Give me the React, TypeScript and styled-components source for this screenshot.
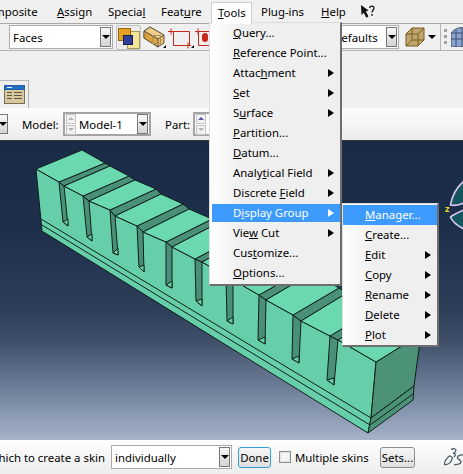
import React from 'react';
import styled, { createGlobalStyle } from 'styled-components';

const GlobalStyle = createGlobalStyle`
  html, body { margin: 0; padding: 0; background: #f0f0f0; }
  body { font-family: "Noto Sans", "Liberation Sans", sans-serif; font-size: 11.4px; color: #000; }
`;

const Page = styled.div`
  position: relative;
  width: 463px;
  height: 474px;
  overflow: hidden;
  display: flex;
  flex-direction: column;
  background: #f0f0f0;
`;

const MenuBar = styled.div`
  height: 23px;
  flex: none;
  display: flex;
  align-items: center;
  margin-left: -20px;
  background: #f0f0f0;
`;

const MenuTitle = styled.span<{ $width: number; $left?: number }>`
  flex: none;
  width: ${({ $width }) => $width}px;
  margin-left: ${({ $left }) => $left ?? 0}px;
  white-space: nowrap;
`;

const ToolsTab = styled(MenuTitle)`
  position: relative;
  z-index: 3;
  height: 21px;
  margin-top: 2px;
  line-height: 20px;
  padding-left: 6px;
  margin-left: -6px;
  box-sizing: content-box;
  border: 1px solid #d0d0d0;
  border-bottom: none;
  background: #fff;
`;

const Toolbar = styled.div`
  height: 28px;
  flex: none;
  display: flex;
  align-items: center;
  box-sizing: border-box;
  border-top: 1px solid #a8a8a8;
  border-bottom: 1px solid #b4b4b4;
  background: #f0f0f0;
`;

const EmptyRow = styled.div`
  height: 57px;
  flex: none;
  display: flex;
  align-items: flex-end;
  background: #f0f0f0;
`;

const ManagerTile = styled.div`
  width: 29px;
  height: 28px;
  display: flex;
  align-items: center;
  justify-content: center;
  box-sizing: border-box;
  padding-left: 1px;
  border-top: 1px solid #b8b8b8;
  border-right: 1px solid #b0b0b0;
`;

const ContextBar = styled.div`
  height: 33px;
  flex: none;
  display: flex;
  align-items: center;
  box-sizing: border-box;
  border-bottom: 1px solid #3a3a3a;
  background: linear-gradient(#fdfdfd, #ececec);
`;

const Label = styled.span<{ $left: number; $width: number }>`
  flex: none;
  width: ${({ $width }) => $width}px;
  margin-left: ${({ $left }) => $left}px;
  white-space: nowrap;
`;

const Combo = styled.div<{ $width: number; $left?: number; $heavy?: boolean }>`
  flex: none;
  display: flex;
  align-items: center;
  justify-content: space-between;
  box-sizing: border-box;
  width: ${({ $width }) => $width}px;
  height: 24px;
  margin-left: ${({ $left }) => $left ?? 0}px;
  border: ${({ $heavy }) => ($heavy ? '2px solid #a4a4a4' : '1px solid #ababab')};
  background: #fff;
  padding: 0 1px 0 ${({ $heavy }) => ($heavy ? 1 : 3)}px;
`;

const DropButton = styled.span`
  flex: none;
  display: flex;
  align-items: flex-start;
  justify-content: center;
  box-sizing: border-box;
  width: 11px;
  height: 20px;
  padding-top: 7px;
  border: 1px solid #777;
  background: linear-gradient(#f8f8f8, #d4d4d4);

  &::after {
    content: '';
    border-left: 4px solid transparent;
    border-right: 4px solid transparent;
    border-top: 4px solid #000;
  }
`;

const LeadDropButton = styled(DropButton)`
  margin-left: -3px;
`;

const BareArrow = styled.span<{ $left: number }>`
  flex: none;
  margin-left: ${({ $left }) => $left}px;
  border-left: 4px solid transparent;
  border-right: 4px solid transparent;
  border-top: 4px solid #000;
`;

const Spinner = styled.span`
  flex: none;
  display: flex;
  flex-direction: column;
  gap: 1px;
  margin-right: 3px;
`;

const SpinStep = styled.span<{ $down?: boolean; $live?: boolean }>`
  display: flex;
  align-items: center;
  justify-content: center;
  width: 8px;
  height: 8px;
  border: 1px solid #c4c4c4;
  background: #f2f2f2;

  &::after {
    content: '';
    border-left: 3px solid transparent;
    border-right: 3px solid transparent;
    ${({ $down }) => ($down ? 'border-top' : 'border-bottom')}: 3px solid ${({ $live }) => ($live ? '#4a5aa8' : '#b4b4b4')};
  }
`;

const ComboText = styled.span<{ $indent?: number }>`
  flex: 1;
  padding-left: ${({ $indent }) => $indent ?? 0}px;
  white-space: nowrap;
  overflow: hidden;
`;

const IconSlot = styled.span<{ $left: number; $active?: boolean }>`
  flex: none;
  display: flex;
  margin-left: ${({ $left }) => $left}px;
  ${({ $active }) =>
    $active &&
    `
    border-radius: 3px;
    box-shadow: inset 0 0 0 1px #c4c4c4;
    background: #ececec;
  `}
`;

const ToolSeparator = styled.span`
  flex: none;
  width: 1px;
  height: 26px;
  margin-left: 4px;
  background: #b4b4b4;
`;

const Viewport = styled.div`
  flex: 1;
  min-height: 0;
  position: relative;
  background: linear-gradient(
    #1a2b47 0%,
    #1d2f4b 30%,
    #2c3e58 56%,
    #3d4d68 66%,
    #8f9db6 93%,
    #a5b2c8 100%
  );
`;

const ModelSvg = styled.svg`
  display: block;
  width: 463px;
  height: 100%;
`;

const PromptBar = styled.div`
  height: 34px;
  flex: none;
  display: flex;
  align-items: center;
  margin-left: -30px;
  background: linear-gradient(#fefefe, #ededed);
`;

const PromptText = styled.span`
  flex: none;
  width: 135px;
  text-align: right;
  white-space: nowrap;
`;

const PushButton = styled.span<{ $focus?: boolean; $left: number; $width: number }>`
  flex: none;
  display: flex;
  align-items: center;
  justify-content: center;
  box-sizing: border-box;
  height: 21px;
  width: ${({ $width }) => $width}px;
  margin-left: ${({ $left }) => $left}px;
  border-radius: 3px;
  border: 1px solid ${({ $focus }) => ($focus ? '#35a0d8' : '#8e8e8e')};
  background: linear-gradient(#f6f6f6, #dedede);
`;

const CheckBox = styled.span`
  flex: none;
  box-sizing: border-box;
  width: 12px;
  height: 12px;
  margin-left: 8px;
  border: 1px solid #8e8e8e;
  box-shadow: inset 0 0 0 1px #e2e2e2;
  background: #f4f4f4;
`;

const LogoSlot = styled.span`
  flex: none;
  display: flex;
  margin-left: 28px;
`;

const Menu = styled.div<{ $left: number; $top: number; $width: number; $inset: number }>`
  position: absolute;
  z-index: 2;
  left: ${({ $left }) => $left}px;
  top: ${({ $top }) => $top}px;
  width: ${({ $width }) => $width}px;
  box-sizing: border-box;
  display: flex;
  flex-direction: column;
  padding: 1px 0 0 ${({ $inset }) => $inset}px;
  background: linear-gradient(90deg, #fff 0, #efefef 32px);
  border-right: 2px solid #6e6e6e;
  border-bottom: 2px solid #6e6e6e;
  border-top: 1px solid #ddd;
  border-left: 1px solid #ddd;
`;

const MenuItem = styled.div<{ $indent: number; $active?: boolean; $tight?: boolean }>`
  position: relative;
  height: ${({ $tight }) => ($tight ? 18 : 20)}px;
  margin-bottom: ${({ $tight }) => ($tight ? 2 : 0)}px;
  line-height: ${({ $tight }) => ($tight ? 17 : 19)}px;
  padding-left: ${({ $indent }) => $indent}px;
  white-space: nowrap;
  color: ${({ $active }) => ($active ? '#fff' : '#000')};
  background: ${({ $active }) => ($active ? '#3d9bff' : 'transparent')};
`;

const SubArrow = styled.span<{ $light?: boolean; $tight?: boolean }>`
  position: absolute;
  right: 6px;
  top: ${({ $tight }) => ($tight ? 5 : 6)}px;
  border-top: 4px solid transparent;
  border-bottom: 4px solid transparent;
  border-left: 6px solid ${({ $light }) => ($light ? '#fff' : '#000')};
`;

const toolsItems: [React.ReactNode, boolean][] = [
  [<><u>Q</u>uery...</>, false],
  [<><u>R</u>eference Point...</>, false],
  [<>Attac<u>h</u>ment</>, true],
  [<><u>S</u>et</>, true],
  [<>S<u>u</u>rface</>, true],
  [<><u>P</u>artition...</>, false],
  [<><u>D</u>atum...</>, false],
  [<>Analy<u>t</u>ical Field</>, true],
  [<>Discrete <u>F</u>ield</>, true],
  [<>D<u>i</u>splay Group</>, true],
  [<>Vie<u>w</u> Cut</>, true],
  [<>Cus<u>t</u>omize...</>, false],
  [<><u>O</u>ptions...</>, false],
];

const groupItems: [React.ReactNode, boolean][] = [
  [<><u>M</u>anager...</>, false],
  [<><u>C</u>reate...</>, false],
  [<><u>E</u>dit</>, true],
  [<><u>C</u>opy</>, true],
  [<><u>R</u>ename</>, true],
  [<><u>D</u>elete</>, true],
  [<><u>P</u>lot</>, true],
];

type Pt = [number, number];

// fronts, left corners and slot feet of each tooth, in page coordinates
const fronts: Pt[] = [[59, 182], [83, 196], [110, 210], [137, 226], [166, 242], [195, 259], [226, 276], [259, 295], [293, 315], [330, 336]];
const lefts: Pt[] = [[64, 186], [89, 201], [115, 216], [143, 232], [172, 247], [202, 262], [233, 280], [266, 300], [301, 321], [338, 340]];
const feetA: Pt[] = [[63, 222], [87, 237], [113, 253], [139, 267], [166, 285], [196, 301], [227, 321], [258, 340], [292, 359], [327, 380]];
const feetB: Pt[] = [[68, 226], [92, 241], [118, 255], [144, 272], [172, 288], [202, 306], [233, 324], [265, 344], [299, 363], [334, 385]];

const pts = (list: Pt[]) => list.map((p) => p.join(',')).join(' ');

// the back edges steepen a little toward the near end of the part
const back = (p: Pt, i: number): Pt => [p[0] + 46, Math.round(p[1] - 46 * (0.41 + 0.021 * i))];

const Model = () => {
  const outline: Pt[] = [[36, 169], [59, 182]];
  fronts.forEach((f, i) => {
    if (i > 0) outline.push(f);
    outline.push(lefts[i]);
  });
  outline.push([376, 362], [371, 418], [368, 433], [42, 231]);

  const allLefts: Pt[] = [[36, 169], ...lefts];
  return (
    <ModelSvg viewBox="0 141 463 299" preserveAspectRatio="none">
      <g stroke="#0e1f1c" strokeWidth="1" strokeLinejoin="round">
        <polygon points={pts(outline)} fill="#66cfa9" />
        <polygon points="376,362 421,334 414,386 371,418" fill="#4b9277" />
        <polygon points="371,418 414,386 413,400 368,433" fill="#4b9277" />
        <line x1="370" y1="425" x2="413" y2="394" />
        <line x1="41" y1="219" x2="371" y2="418" />
        <line x1="42" y1="225" x2="370" y2="425" />
        {fronts.map((f, i) => (
          <g key={i}>
            <polygon points={pts([f, feetA[i], feetB[i], lefts[i]])} fill="#4a9078" />
            <polygon points={pts([feetA[i], feetB[i], [feetB[i][0], feetB[i][1] - 7]])} fill="#66cfa9" />
            <polygon points={pts([f, back(f, i), back(lefts[i], i + 1), lefts[i]])} fill="#4a9078" />
          </g>
        ))}
        {fronts.map((f, i) => (
          <polygon
            key={i}
            points={pts([allLefts[i], f, back(f, i), back(allLefts[i], i)])}
            fill="#6bd9b0"
          />
        ))}
        <polygon points="338,340 376,362 421,334 383,312" fill="#6bd9b0" />
      </g>
      {/* view triad */}
      <g stroke="#d9c9f2" strokeWidth="1.6" fill="#14555e">
        <path d="M464 181 C456 188 452 196 450.500 205 C456 206 460 205 464 203 Z" />
        <path d="M464 210 C459 212 454 214 450.500 217 C452 221 458 226 464 229 Z" />
      </g>
      <text x="445" y="212" fontSize="9" fontWeight="700" fill="#f4e818" fontFamily="'Liberation Sans', sans-serif">z</text>
    </ModelSvg>
  );
};

const SelectIcon = () => (
  <svg width="25" height="25" viewBox="0 0 25 25">
    <rect x="11.500" y="6.500" width="12" height="17" fill="#f3e39b" stroke="#a89a5a" />
    <rect x="2.500" y="3.500" width="12" height="12" fill="#e6a021" stroke="#9a6a12" />
    <rect x="7.500" y="10.500" width="9" height="9" fill="#2f3f9a" stroke="#14204f" />
  </svg>
);

const BoxIcon = () => (
  <svg width="24" height="24" viewBox="0 0 24 24">
    <polygon points="1,6 7,2 21,10 21,18 15,22 1,13" fill="#eebb6a" stroke="#5e5a4c" />
    <polygon points="1,6 7,2 21,10 15,14" fill="#f0cd86" stroke="#5e5a4c" />
    <polygon points="1,6 15,14 15,22 1,13" fill="#dca03c" stroke="#5e5a4c" />
    <rect x="9.500" y="10.500" width="8" height="8" fill="none" stroke="#a89060" />
    <polygon points="20,23 23,23 23,20" fill="#000" />
  </svg>
);

const RedFrameIcon = () => (
  <svg width="26" height="24" viewBox="0 0 26 24">
    <g fill="none" stroke="#c8281e">
      <path d="M3.500 6.500H21.500V20.500H5.500V6.500" />
      <path d="M0 6.500H6M3 3.500V9.500M17 20.500H23M20 17.500V23.500" />
    </g>
    <polygon points="23,23 26,23 26,20" fill="#000" />
  </svg>
);

const RedNodesIcon = () => (
  <svg width="24" height="24" viewBox="0 0 24 24">
    <g fill="none" stroke="#c8281e">
      <path d="M2 6.500H18M3.500 6.500V20.500H18" />
      <path d="M0 6.500H6M3 3.500V9.500" />
    </g>
    <rect x="7" y="8" width="6" height="9" rx="3" fill="#c8281e" />
    <rect x="15" y="8" width="6" height="9" rx="3" fill="#c8281e" />
  </svg>
);

const WireBoxIcon = () => (
  <svg width="20" height="20" viewBox="0 0 20 20">
    <polygon points="1,7 7,1 19,1 19,13 13,19 1,19" fill="#bda672" stroke="#7c5a14" />
    <path d="M1 7H13V19M13 7L19 1M7 1V13H19M7 13L1 19" fill="none" stroke="#7c5a14" />
  </svg>
);

const MeshIcon = () => (
  <svg width="16" height="20" viewBox="0 0 16 20">
    <path d="M0 6 C3 2 8 0 16 0 V20 H0 Z" fill="#8aa3cf" stroke="#3f4f6f" />
    <path d="M0 12H16M5 3V20M11 1V20M0 6H16" stroke="#3f4f6f" fill="none" />
  </svg>
);

const TableIcon = () => (
  <svg width="21" height="19" viewBox="0 0 21 19">
    <rect x="0.500" y="0.500" width="20" height="18" fill="#d8c89c" stroke="#77705a" />
    <rect x="0.500" y="0.500" width="20" height="4" fill="#1f6fc4" stroke="#1f5fa4" />
    <rect x="3" y="2" width="5" height="1" fill="#fff" />
    <path d="M3 7.500H8M3 10.500H8M3 13.500H8M10 7.500H18M10 10.500H18M10 13.500H18" stroke="#5a5442" />
  </svg>
);

const GripIcon = () => (
  <svg width="3" height="16" viewBox="0 0 3 16">
    <path d="M0 0h3v3H0zM0 6h3v3H0zM0 12h3v3H0z" fill="#a0a0a0" />
  </svg>
);

const PointerHelpIcon = () => (
  <svg width="14" height="14" viewBox="0 0 14 14">
    <path d="M0 0L7.500 5.500L4.800 6.500L7.500 11.500L5.300 12.700L2.800 7.800L0.500 10Z" fill="#111" />
    <path d="M8.500 3C9 0.500 13 0.500 13 3C13 5 11 5 11 7.500M11 9V11" fill="none" stroke="#111" strokeWidth="1.300" />
  </svg>
);

const DsLogo = () => (
  <svg width="21" height="19" viewBox="0 0 21 19">
    <g fill="none" stroke="#4f5f6a" strokeWidth="1.300">
      <path d="M8 1.500C11 0 14 1 12.500 3.500C12 4.500 11 5 10 5.500C12.500 5 13 7 11 9" />
      <path d="M7 7.500C3.500 10 1 14 1.500 16.500C5 17 9 14 9.500 9.500L7 8" />
      <path d="M20 7C17 6.500 14 8 14.500 10C15 11.500 18 11.500 18 14C18 16 14 17 11 16.500" />
    </g>
  </svg>
);

const App = () => {
  return (
    <Page>
      <GlobalStyle />
      <MenuBar>
        <MenuTitle $width={77}>Composite</MenuTitle>
        <MenuTitle $width={51}><u>A</u>ssign</MenuTitle>
        <MenuTitle $width={53}>Specia<u>l</u></MenuTitle>
        <MenuTitle $width={56}>Feat<u>u</u>re</MenuTitle>
        <ToolsTab $width={33}><u>T</u>ools</ToolsTab>
        <MenuTitle $width={60} $left={9}>Plu<u>g</u>-ins</MenuTitle>
        <MenuTitle $width={40}><u>H</u>elp</MenuTitle>
        <IconSlot $left={0}><PointerHelpIcon /></IconSlot>
      </MenuBar>
      <Toolbar>
        <Combo $width={104} $left={9}>
          <ComboText>Faces</ComboText>
          <DropButton />
        </Combo>
        <IconSlot $left={3} $active><SelectIcon /></IconSlot>
        <IconSlot $left={2}><BoxIcon /></IconSlot>
        <IconSlot $left={1}><RedFrameIcon /></IconSlot>
        <IconSlot $left={1}><RedNodesIcon /></IconSlot>
        <Combo $width={180} $left={0}>
          <ComboText $indent={110}>Defaults</ComboText>
          <DropButton />
        </Combo>
        <IconSlot $left={6}><WireBoxIcon /></IconSlot>
        <BareArrow $left={3} />
        <ToolSeparator />
        <IconSlot $left={3}><GripIcon /></IconSlot>
        <IconSlot $left={4}><MeshIcon /></IconSlot>
      </Toolbar>
      <EmptyRow>
        <ManagerTile><TableIcon /></ManagerTile>
      </EmptyRow>
      <ContextBar>
        <LeadDropButton />
        <Label $left={14} $width={37}>Model:</Label>
        <Combo $width={88} $left={4} $heavy>
          <Spinner><SpinStep /><SpinStep $down /></Spinner>
          <ComboText>Model-1</ComboText>
          <DropButton />
        </Combo>
        <Label $left={14} $width={24}>Part:</Label>
        <Combo $width={60} $left={4} $heavy>
          <Spinner><SpinStep $live /><SpinStep $down /></Spinner>
        </Combo>
      </ContextBar>
      <Viewport>
        <Model />
      </Viewport>
      <PromptBar>
        <PromptText>which to create a skin</PromptText>
        <Combo $width={121} $left={6}>
          <ComboText>individually</ComboText>
          <DropButton />
        </Combo>
        <PushButton $focus $left={6} $width={33}>Done</PushButton>
        <CheckBox />
        <Label $left={4} $width={73}>Multiple skins</Label>
        <PushButton $left={12} $width={35}>Sets...</PushButton>
        <LogoSlot><DsLogo /></LogoSlot>
      </PromptBar>

      <Menu $left={209} $top={22} $width={133} $inset={2}>
        {toolsItems.map(([label, sub], i) => (
          <MenuItem key={i} $indent={21} $active={i === 9} $tight>
            {label}
            {sub && <SubArrow $light={i === 9} $tight />}
          </MenuItem>
        ))}
      </Menu>
      <Menu $left={342} $top={203} $width={97} $inset={0}>
        {groupItems.map(([label, sub], i) => (
          <MenuItem key={i} $indent={22} $active={i === 0}>
            {label}
            {sub && <SubArrow />}
          </MenuItem>
        ))}
      </Menu>
    </Page>
  );
};

export default App;
